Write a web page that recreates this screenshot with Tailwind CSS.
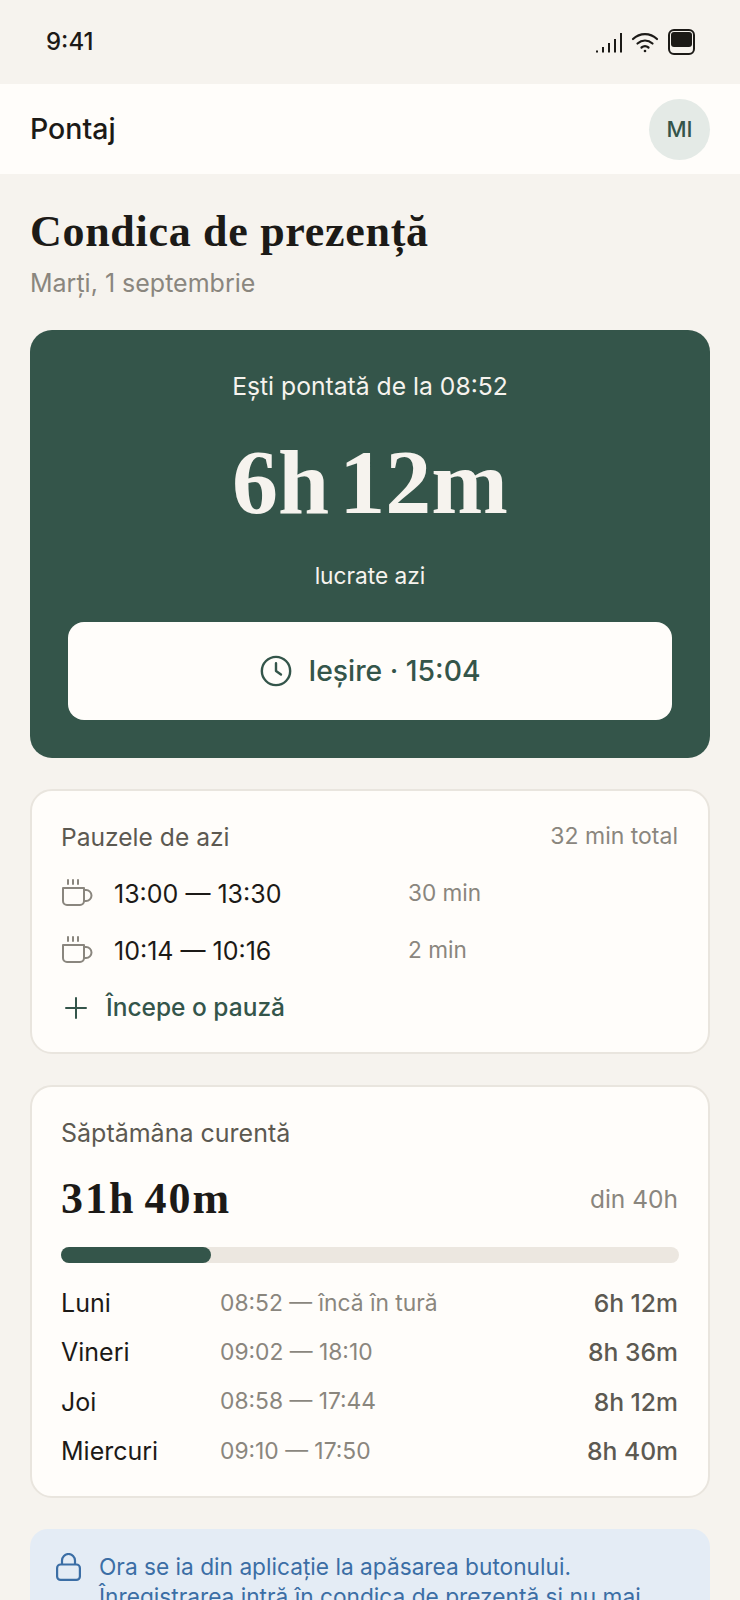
<!DOCTYPE html>
<html lang="ro">
<head>
    <meta charset="utf-8">
    <title>Pontaj</title>
    <script src="https://cdn.jsdelivr.net/npm/@tailwindcss/browser@4"></script>
</head>
<body class="bg-[#f6f3ee] font-['Inter',sans-serif] [font-optical-sizing:none] text-[#1c1a17] w-[740px] h-[1600px] overflow-hidden">
    <!-- Status bar -->
    <div class="h-[84px] flex items-center justify-between pl-[46px] pr-[45px] pb-[1px]">
        <span class="text-[24px] leading-none font-medium">9:41</span>
        <div class="flex items-center gap-[9px]">
            <svg width="28" height="24" viewBox="0 0 28 24" fill="none" stroke="#1c1a17" stroke-width="2">
                <path d="M3 20.500v2M9 17v5.500M15 13v9.500M21 9v13.500M27 3v19.500" />
            </svg>
            <svg width="28" height="22" viewBox="0 0 28 22" fill="none" stroke="#1c1a17" stroke-width="2.200" stroke-linecap="round">
                <path d="M2 8c7-6.500 17-6.500 24 0M6.500 12.500c4.500-4 10.500-4 15 0M10.500 16.500c2-1.500 5-1.500 7 0" />
                <circle cx="14" cy="20" r="1.300" fill="#1c1a17" stroke="none" />
            </svg>
            <div class="w-[27px] h-[26px] rounded-[6px] border-2 border-[#1c1a17] p-[1px]">
                <div class="w-full h-[15px] bg-[#1c1a17] rounded-[3px]"></div>
            </div>
        </div>
    </div>

    <!-- Header -->
    <header class="h-[90px] bg-[#fffdfa] flex items-center justify-between px-[30px]">
        <span class="text-[28.500px] font-medium">Pontaj</span>
        <div class="w-[61px] h-[61px] rounded-full bg-[#e4eae6] flex items-center justify-center text-[22px] font-medium text-[#34554a]">MI</div>
    </header>

    <main class="px-[30px]">
        <h1 class="mt-[32px] text-[44px] leading-[52px] tracking-[0.7px] font-bold font-['Liberation_Serif',serif]">Condica de prezență</h1>
        <p class="mt-[10px] text-[25px] leading-[30px] text-[#8a867e]">Marți, 1 septembrie</p>

        <!-- Hero -->
        <section class="mt-[32px] h-[428px] bg-[#34554a] rounded-[22px] px-[38px] pt-[41px] text-center text-[#f6f3ee]">
            <p class="text-[24.700px] leading-[30px]">Ești pontată de la 08:52</p>
            <p class="mt-[31px] text-[92px] leading-[100px] [word-spacing:-13px] font-bold font-['Liberation_Serif',serif]">6h 12m</p>
            <p class="mt-[30px] text-[22.700px] leading-[28px]">lucrate azi</p>
            <button class="mt-[32px] w-full h-[98px] bg-[#fffdfa] rounded-[16px] flex items-center justify-center gap-[15px] text-[#34554a] text-[28.300px] font-medium">
                <svg width="34" height="34" viewBox="0 0 24 24" fill="none" stroke="#34554a" stroke-width="1.700" stroke-linecap="round" stroke-linejoin="round">
                    <circle cx="12" cy="12" r="10" />
                    <path d="M12 6.500V12l3.500 2.500" />
                </svg>
                Ieșire · 15:04
            </button>
        </section>

        <!-- Breaks -->
        <section class="mt-[31px] h-[265px] bg-[#fffdfa] border-2 border-[#e9e5de] rounded-[22px] pl-[29px] pr-[30px] pt-[30px]">
            <div class="flex items-center justify-between h-[32px]">
                <span class="text-[24.600px] text-[#5c5951]">Pauzele de azi</span>
                <span class="text-[23px] text-[#8a867e] pb-[2px]">32 min total</span>
            </div>
            <div class="mt-[13px] flex items-center h-[57px]">
                <svg class="w-[32px] h-[32px]" viewBox="0 0 32 32" fill="none" stroke="#8a867e" stroke-width="2" stroke-linecap="round" stroke-linejoin="round">
                    <path d="M7 1v4M12 1v4M17 1v4M2 9h21v13a4 4 0 0 1-4 4H6a4 4 0 0 1-4-4zM23 11h2a5.500 5.500 0 0 1 0 11h-2" />
                </svg>
                <span class="ml-[21px] w-[294px] text-[25px]">13:00 — 13:30</span>
                <span class="text-[22.600px] text-[#8a867e] pb-[3px]">30 min</span>
            </div>
            <div class="flex items-center h-[57px]">
                <svg class="w-[32px] h-[32px]" viewBox="0 0 32 32" fill="none" stroke="#8a867e" stroke-width="2" stroke-linecap="round" stroke-linejoin="round">
                    <path d="M7 1v4M12 1v4M17 1v4M2 9h21v13a4 4 0 0 1-4 4H6a4 4 0 0 1-4-4zM23 11h2a5.500 5.500 0 0 1 0 11h-2" />
                </svg>
                <span class="ml-[21px] w-[294px] text-[25px]">10:14 — 10:16</span>
                <span class="text-[22.600px] text-[#8a867e] pb-[3px]">2 min</span>
            </div>
            <div class="flex items-center h-[55px] text-[#34554a]">
                <svg class="w-[30px] h-[30px]" viewBox="0 0 30 30" fill="none" stroke="#34554a" stroke-width="2" stroke-linecap="round">
                    <path d="M15 5v20M5 15h20" />
                </svg>
                <span class="ml-[15px] text-[24.500px] font-medium">Începe o pauză</span>
            </div>
        </section>

        <!-- Week -->
        <section class="mt-[31px] h-[413px] bg-[#fffdfa] border-2 border-[#e9e5de] rounded-[22px] pl-[29px] pr-[30px] pt-[30px]">
            <p class="text-[25px] leading-[32px] text-[#5c5951]">Săptămâna curentă</p>
            <div class="mt-[24px] flex items-center justify-between h-[52px]">
                <span class="text-[44px] tracking-[2px] [word-spacing:-4px] font-bold font-['Liberation_Serif',serif]">31h 40m</span>
                <span class="text-[24.500px] text-[#8a867e]">din 40h</span>
            </div>
            <div class="mt-[22px] mr-[-1px] h-[16px] rounded-full bg-[#ece7e0]">
                <div class="h-full w-[150px] rounded-full bg-[#34554a]"></div>
            </div>
            <div class="mt-[16px]">
                <div class="flex items-center h-[49.330px]">
                    <span class="w-[159px] text-[25px]">Luni</span>
                    <span class="flex-1 text-[22.800px] text-[#8a867e] pb-[2px]">08:52 — încă în tură</span>
                    <span class="text-[24.700px] font-medium text-[#5c5951]">6h 12m</span>
                </div>
                <div class="flex items-center h-[49.330px]">
                    <span class="w-[159px] text-[25px]">Vineri</span>
                    <span class="flex-1 text-[22.800px] text-[#8a867e] pb-[2px]">09:02 — 18:10</span>
                    <span class="text-[24.700px] font-medium text-[#5c5951]">8h 36m</span>
                </div>
                <div class="flex items-center h-[49.330px]">
                    <span class="w-[159px] text-[25px]">Joi</span>
                    <span class="flex-1 text-[22.800px] text-[#8a867e] pb-[2px]">08:58 — 17:44</span>
                    <span class="text-[24.700px] font-medium text-[#5c5951]">8h 12m</span>
                </div>
                <div class="flex items-center h-[49.330px]">
                    <span class="w-[159px] text-[25px]">Miercuri</span>
                    <span class="flex-1 text-[22.800px] text-[#8a867e] pb-[2px]">09:10 — 17:50</span>
                    <span class="text-[24.700px] font-medium text-[#5c5951]">8h 40m</span>
                </div>
            </div>
        </section>

        <!-- Info -->
        <section class="mt-[31px] bg-[#e4ecf5] rounded-[18px] pl-[26px] pr-[30px] pt-[23px] pb-[24px] flex gap-[18px] text-[#3b6ea5]">
            <svg class="shrink-0 mt-[1px]" width="25" height="28" viewBox="0 0 25 28" fill="none" stroke="#3b6ea5" stroke-width="2.200" stroke-linejoin="round">
                <rect x="1.100" y="11.500" width="22.800" height="15.400" rx="3.500" />
                <path d="M6 11.500V7.500a6.500 6.500 0 0 1 13 0v4" />
            </svg>
            <p class="text-[22.700px] leading-[30px]">Ora se ia din aplicație la apăsarea butonului. Înregistrarea intră în condica de prezență și nu mai poate fi modificată.</p>
        </section>
    </main>
</body>
</html>
